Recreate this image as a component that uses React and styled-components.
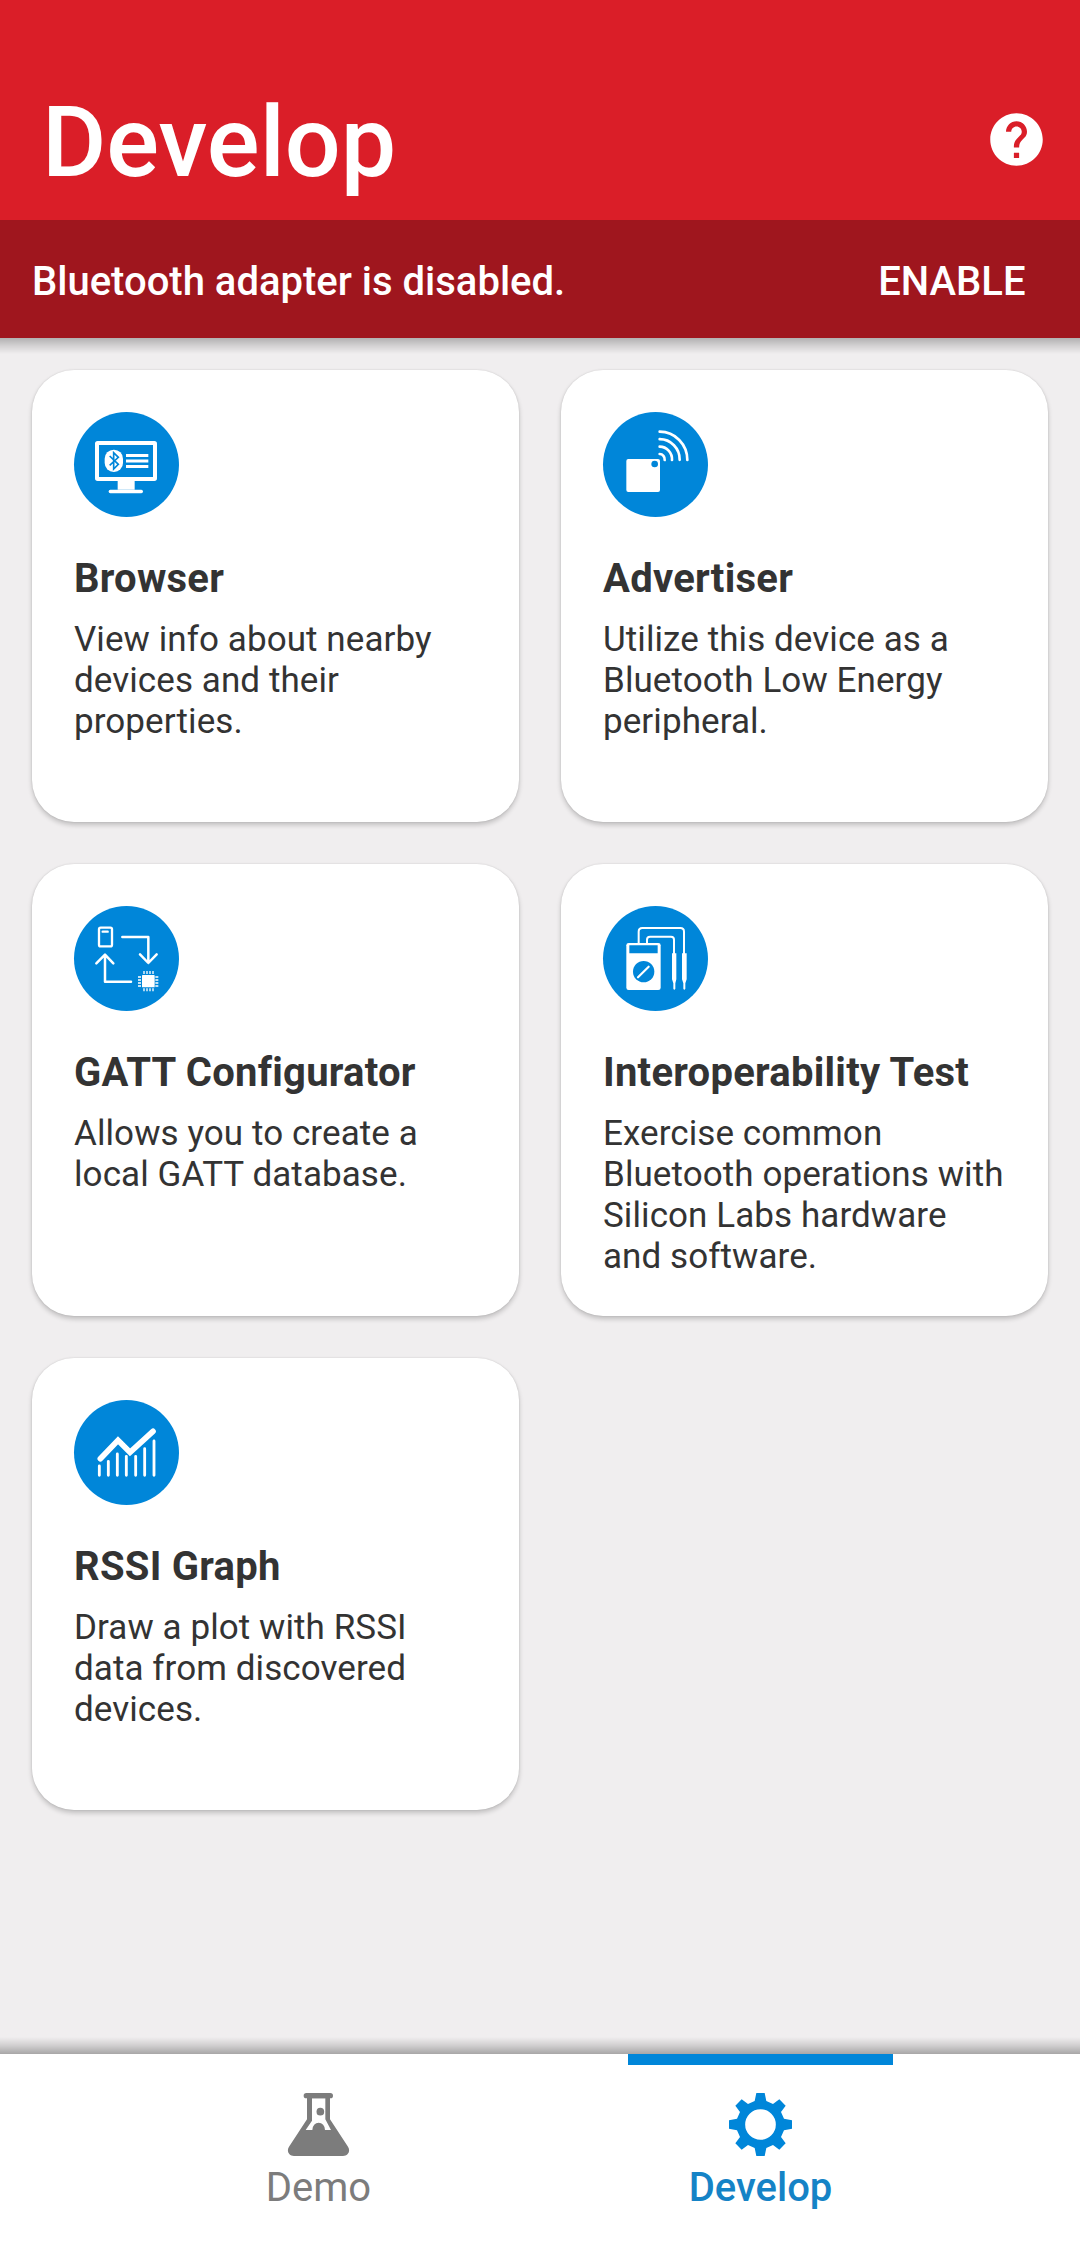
import React from "react";
import styled, { createGlobalStyle } from "styled-components";

const blue = "#0086d9";

const GlobalStyle = createGlobalStyle`
  * { box-sizing: border-box; }
  body {
    margin: 0;
    background: #f0eeef;
    font-family: Roboto, "Liberation Sans", sans-serif;
  }
  h1, h2, p { margin: 0; }
  button {
    border: 0;
    padding: 0;
    background: none;
    color: inherit;
    font: inherit;
  }
`;

const Screen = styled.div`
  display: flex;
  flex-direction: column;
  width: 1080px;
  height: 2247px;
  overflow: hidden;
  background: #f0eeef;
`;

const Header = styled.header`
  display: flex;
  align-items: flex-end;
  justify-content: space-between;
  height: 220px;
  padding: 0 32px 20px 42px;
  background: #da1e28;
  color: #fff;
`;

const PageTitle = styled.h1`
  font-size: 98.6px;
  font-weight: 500;
  line-height: 115px;
`;

const HelpButton = styled.button`
  display: flex;
  margin-bottom: 29px;
`;

const Banner = styled.div`
  display: flex;
  align-items: center;
  justify-content: space-between;
  height: 118px;
  padding: 4px 54.5px 0 32px;
  background: #9f161e;
  color: #fff;
  font-size: 40px;
  font-weight: 500;
  line-height: 47px;
`;

const Shadow = styled.div`
  height: ${(p) => p.$size}px;
  background: linear-gradient(
    ${(p) => (p.$up ? "to top" : "to bottom")},
    rgba(0, 0, 0, ${(p) => p.$strength}),
    rgba(0, 0, 0, ${(p) => p.$strength * 0.45}) 50%,
    rgba(0, 0, 0, 0)
  );
`;

const Grid = styled.main`
  flex: 1;
  display: grid;
  grid-template-columns: 1fr 1fr;
  grid-auto-rows: 452px;
  gap: 42px;
  padding: 16px 32px 0;
`;

const Card = styled.article`
  display: flex;
  flex-direction: column;
  padding: 42px 38px 0 42px;
  border-radius: 42px;
  background: #fff;
  color: #333;
  box-shadow: 0 3px 5px rgba(0, 0, 0, 0.2), 0 0 2px rgba(0, 0, 0, 0.12);
`;

const Badge = styled.svg`
  display: block;
  width: 105px;
  height: 105px;
  border-radius: 50%;
  background: ${blue};
`;

const CardTitle = styled.h2`
  margin-top: 38px;
  font-size: 40px;
  font-weight: 700;
  line-height: 47px;
  letter-spacing: 0.25px;
  white-space: nowrap;
`;

const CardText = styled.p`
  margin-top: 17px;
  font-size: 35px;
  line-height: 41px;
  letter-spacing: 0.08px;
`;

const Nav = styled.nav`
  display: flex;
  justify-content: center;
  gap: 177px;
  height: 193px;
  padding-left: 0;
  padding-right: 1px;
  background: #fff;
`;

const Tab = styled.button`
  display: flex;
  flex-direction: column;
  align-items: center;
  width: 265px;
  padding-top: 28px;
  border-top: 11px solid ${(p) => (p.$active ? blue : "transparent")};
  color: ${(p) => (p.$active ? "#1583c6" : "#7c7c7c")};
  font-size: 40px;
  font-weight: ${(p) => (p.$active ? 500 : 400)};
  line-height: 47px;
`;

const TabIcon = styled.svg`
  display: block;
  width: 63px;
  height: 63px;
  margin-bottom: 8px;
`;

const BrowserIcon = () => (
  <Badge viewBox="42 36 315 315" fill="none">
    <rect x="111" y="129" width="174" height="108" rx="2" stroke="#fff" strokeWidth="12" />
    <path d="M173 240h51v29h-51z" fill="#fff" />
    <path d="M151 274.500h93" stroke="#fff" strokeWidth="10" strokeLinecap="round" />
    <rect x="134" y="149" width="55" height="67" rx="27" fill="#fff" />
    <path d="M149 168l26 25-14 14v-49l14 14-26 24" stroke={blue} strokeWidth="5" />
    <path d="M198 166.500h67M198 183h67M198 199.500h67" stroke="#fff" strokeWidth="9" />
  </Badge>
);

const AdvertiserIcon = () => (
  <Badge viewBox="39 36 315 315" fill="none">
    <rect x="109" y="177" width="101" height="99" rx="6" fill="#fff" />
    <circle cx="194" cy="192" r="10" fill={blue} />
    <path
      d="M209 95a83 85 0 0 1 83 85M209 117.500a60 61 0 0 1 60 62M209 140a37 38 0 0 1 37 40M209 162a15 16 0 0 1 15 18"
      stroke="#fff"
      strokeWidth="8"
      strokeLinecap="round"
    />
  </Badge>
);

const GattIcon = () => (
  <Badge viewBox="42 48 315 315" fill="none">
    <g stroke="#fff" strokeLinecap="round" strokeLinejoin="round">
      <rect x="117" y="113" width="39" height="56" rx="5" strokeWidth="7" />
      <path d="M128 125h15" strokeWidth="7" />
      <path d="M187 141h78v77M240 193l25 26 25-26M213 275h-78v-80M109 220l26-26 25 26" strokeWidth="7.500" />
    </g>
    <rect x="246" y="255" width="38" height="37" rx="2" fill="#fff" />
    <path
      d="M252 243v9M261 243v9M270 243v9M279 243v9M252 295v9M261 295v9M270 295v9M279 295v9M234 261h9M234 270h9M234 279h9M234 288h9M286 261h9M286 270h9M286 279h9M286 288h9"
      stroke="#fff"
      strokeWidth="4"
    />
  </Badge>
);

const InteroperabilityIcon = () => (
  <Badge viewBox="39 48 315 315" fill="none">
    <path d="M146 160v-35q0-11 11-11h114q11 0 11 11v68M171 160v-11q0-9 9-9h63q9 0 9 9v44" stroke="#fff" strokeWidth="6" />
    <rect x="109" y="159" width="103" height="141" rx="7" fill="#fff" />
    <path d="M118 166h85v24h-85z" fill={blue} />
    <circle cx="161" cy="245" r="32" fill={blue} />
    <path d="M144 262l32-32" stroke="#fff" strokeWidth="6.500" strokeLinecap="round" />
    <path
      d="M246 190h13v78l-3 12v16q-3 6-6 0v-16l-4-12zM276 190h14v78l-4 12v16q-3 6-6 0v-16l-4-12z"
      fill="#fff"
    />
  </Badge>
);

const RssiIcon = () => (
  <Badge viewBox="42 45 315 315" fill="none" stroke="#fff" strokeLinecap="round">
    <path d="M121 221l53-55 36 36 69-63" strokeWidth="17" strokeLinejoin="miter" />
    <path
      d="M118 243v28M145 229v42M172 207v64M199 214v57M227 214v57M254 191v80M282 168v103"
      strokeWidth="8.500"
    />
  </Badge>
);

const HelpIcon = () => (
  <svg width="63" height="63" viewBox="0 0 24 24" fill="currentColor">
    <path d="M12 2C6.480 2 2 6.480 2 12s4.480 10 10 10 10-4.480 10-10S17.520 2 12 2zm1 17h-2v-2h2v2zm2.070-7.750-.9.920C13.450 12.900 13 13.500 13 15h-2v-.5c0-1.100.45-2.100 1.170-2.830l1.240-1.260c.37-.36.590-.86.590-1.410 0-1.100-.9-2-2-2s-2 .9-2 2H8c0-2.210 1.790-4 4-4s4 1.790 4 4c0 .880-.36 1.680-.93 2.250z" />
  </svg>
);

const FlaskIcon = () => (
  <TabIcon viewBox="171 189 189 189" fill="currentColor">
    <rect x="221" y="189" width="88" height="16" rx="8" />
    <path
      fillRule="evenodd"
      d="M231 200h69v68l54 82c8 13 1 28-15 28H192c-16 0-23-15-15-28l54-82zM246 205v67l-19 28h20a19 22 0 0 1 38 0h18l-17-32V205z"
    />
    <circle cx="271" cy="245" r="11.500" />
  </TabIcon>
);

const GearIcon = () => (
  <TabIcon viewBox="357 189 189 189" fill={blue}>
    <path
      fillRule="evenodd"
      d="M439 189H464L469 213L489 222L508 208L527 227L513 246L522 266L546 271V296L522 301L513 321L527 340L508 359L489 345L469 354L464 378H439L434 354L414 345L395 359L376 340L390 321L381 301L357 296V271L381 266L390 246L376 227L395 208L414 222L434 213ZM451.500 237.500a46 46 0 1 0 0 92a46 46 0 1 0 0-92Z"
    />
  </TabIcon>
);

const tools = [
  { title: "Browser", text: "View info about nearby devices and their properties.", Icon: BrowserIcon },
  { title: "Advertiser", text: "Utilize this device as a Bluetooth Low Energy peripheral.", Icon: AdvertiserIcon },
  { title: "GATT Configurator", text: "Allows you to create a local GATT database.", Icon: GattIcon },
  {
    title: "Interoperability Test",
    text: "Exercise common Bluetooth operations with Silicon Labs hardware and software.",
    Icon: InteroperabilityIcon,
  },
  { title: "RSSI Graph", text: "Draw a plot with RSSI data from discovered devices.", Icon: RssiIcon },
];

export default function App() {
  return (
    <>
      <GlobalStyle />
      <Screen>
        <Header>
          <PageTitle>Develop</PageTitle>
          <HelpButton aria-label="Help">
            <HelpIcon />
          </HelpButton>
        </Header>
        <Banner>
          <span>Bluetooth adapter is disabled.</span>
          <button>ENABLE</button>
        </Banner>
        <Shadow $size={16} $strength={0.26} />
        <Grid>
          {tools.map(({ title, text, Icon }) => (
            <Card key={title}>
              <Icon />
              <CardTitle>{title}</CardTitle>
              <CardText>{text}</CardText>
            </Card>
          ))}
        </Grid>
        <Shadow $size={17} $strength={0.3} $up />
        <Nav>
          <Tab>
            <FlaskIcon />
            Demo
          </Tab>
          <Tab $active>
            <GearIcon />
            Develop
          </Tab>
        </Nav>
      </Screen>
    </>
  );
}
